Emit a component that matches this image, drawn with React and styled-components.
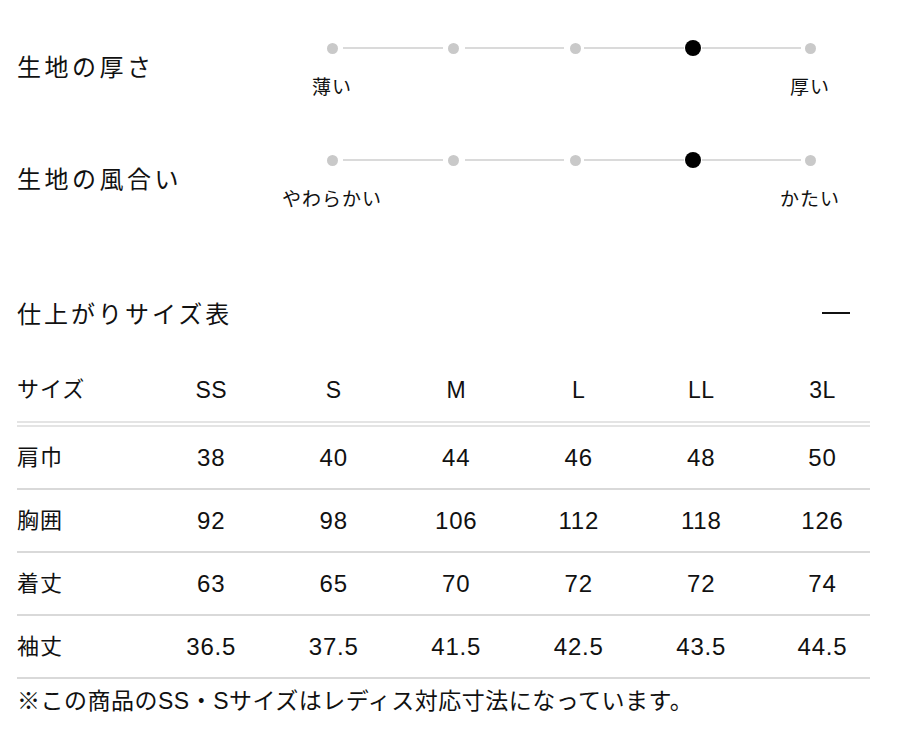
import React from "react";
import styled, { createGlobalStyle } from "styled-components";

const GlobalStyle = createGlobalStyle`
  body {
    margin: 0;
    background: #fff;
    color: #111;
    font-family: "Liberation Sans", "Noto Sans CJK JP", sans-serif;
  }
`

const Page = styled.div`
  width: 904px;
  padding: 40px 0 0 17px;
  box-sizing: border-box;
`

const Sliders = styled.div`
  display: flex;
  flex-direction: column;
  gap: 54px;
`

const SliderRow = styled.div`
  display: flex;
`

const SliderTitle = styled.div`
  width: 255px;
  margin-top: 8px;
  font-family: "Noto Sans CJK JP", sans-serif;
  font-size: 24px;
  line-height: 36px;
  letter-spacing: 3.5px;
`

const SliderBody = styled.div`
  display: flex;
  flex-direction: column;
`

const Track = styled.div`
  display: flex;
  align-items: center;
  width: 494px;
  height: 16px;
  margin-left: 52px;
`

const Stop = styled.div`
  width: 16px;
  height: 16px;
  display: flex;
  align-items: center;
  justify-content: center;
  flex-shrink: 0;
  &::before {
    content: "";
    display: block;
    width: ${p => (p.$active ? 16 : 11)}px;
    height: ${p => (p.$active ? 16 : 11)}px;
    border-radius: 50%;
    background: ${p => (p.$active ? "#000" : "#c9c9c9")};
  }
`

const Segment = styled.div`
  flex: 1;
  height: 2px;
  margin: 0 ${p => (p.$near ? 1 : 3)}px;
  background: #dadada;
`

const Labels = styled.div`
  display: flex;
  justify-content: space-between;
  width: 598px;
  margin-top: 18px;
`

const Label = styled.div`
  width: 120px;
  text-align: center;
  font-family: "Noto Sans CJK JP", sans-serif;
  font-size: 19px;
  line-height: 24px;
  letter-spacing: 1px;
`

const SectionHead = styled.div`
  display: flex;
  justify-content: space-between;
  align-items: center;
  width: 853px;
  margin-top: 85px;
  padding-right: 20px;
  box-sizing: border-box;
`

const SectionTitle = styled.h2`
  margin: 0;
  font-family: "Noto Sans CJK JP", sans-serif;
  font-weight: 400;
  font-size: 24px;
  line-height: 36px;
  letter-spacing: 3px;
`

const Minus = styled.span`
  display: block;
  width: 28px;
  height: 2px;
  background: #111;
`

const Table = styled.div`
  width: 853px;
  margin-top: 27px;
`

const Row = styled.div`
  display: grid;
  grid-template-columns: 133px repeat(5, 122.5px) 120px;
  align-items: center;
  height: ${p => (p.$head ? 63 : 61)}px;
  border-bottom: ${p => (p.$head ? "6px double #e4e4e4" : "2px solid #d9d9d9")};
`

const Cell = styled.div`
  font-size: ${p => (p.$label ? 22 : p.$head ? 23 : 24)}px;
  line-height: 30px;
  text-align: ${p => (p.$label ? "left" : "center")};
  letter-spacing: ${p => (p.$label ? 1 : p.$head ? 0.5 : 0.8)}px;
`

const Note = styled.p`
  margin: 7px 0 0;
  font-size: 23px;
  line-height: 30px;
  letter-spacing: 0.5px;
`

const sliders = [
  { title: "生地の厚さ", left: "薄い", right: "厚い", value: 3 },
  { title: "生地の風合い", left: "やわらかい", right: "かたい", value: 3 },
]

const sizes = ["SS", "S", "M", "L", "LL", "3L"]

const rows = [
  ["肩巾", "38", "40", "44", "46", "48", "50"],
  ["胸囲", "92", "98", "106", "112", "118", "126"],
  ["着丈", "63", "65", "70", "72", "72", "74"],
  ["袖丈", "36.5", "37.5", "41.5", "42.5", "43.5", "44.5"],
]

function Slider({ title, left, right, value }) {
  const stops = []
  for (let i = 0; i < 5; i++) {
    if (i > 0) stops.push(<Segment key={"s" + i} $near={i === value || i - 1 === value} />)
    stops.push(<Stop key={i} $active={i === value} />)
  }
  return (
    <SliderRow>
      <SliderTitle>{title}</SliderTitle>
      <SliderBody>
        <Track>{stops}</Track>
        <Labels>
          <Label>{left}</Label>
          <Label>{right}</Label>
        </Labels>
      </SliderBody>
    </SliderRow>
  )
}

export default function App() {
  return (
    <Page>
      <GlobalStyle />
      <Sliders>
        {sliders.map(s => (
          <Slider key={s.title} {...s} />
        ))}
      </Sliders>

      <SectionHead>
        <SectionTitle>仕上がりサイズ表</SectionTitle>
        <Minus />
      </SectionHead>

      <Table>
        <Row $head>
          <Cell $label>サイズ</Cell>
          {sizes.map(s => (
            <Cell key={s} $head>{s}</Cell>
          ))}
        </Row>
        {rows.map(r => (
          <Row key={r[0]}>
            {r.map((v, i) => (
              <Cell key={i} $label={i === 0}>{v}</Cell>
            ))}
          </Row>
        ))}
      </Table>
      <Note>※この商品のSS・Sサイズはレディス対応寸法になっています。</Note>
    </Page>
  )
}
